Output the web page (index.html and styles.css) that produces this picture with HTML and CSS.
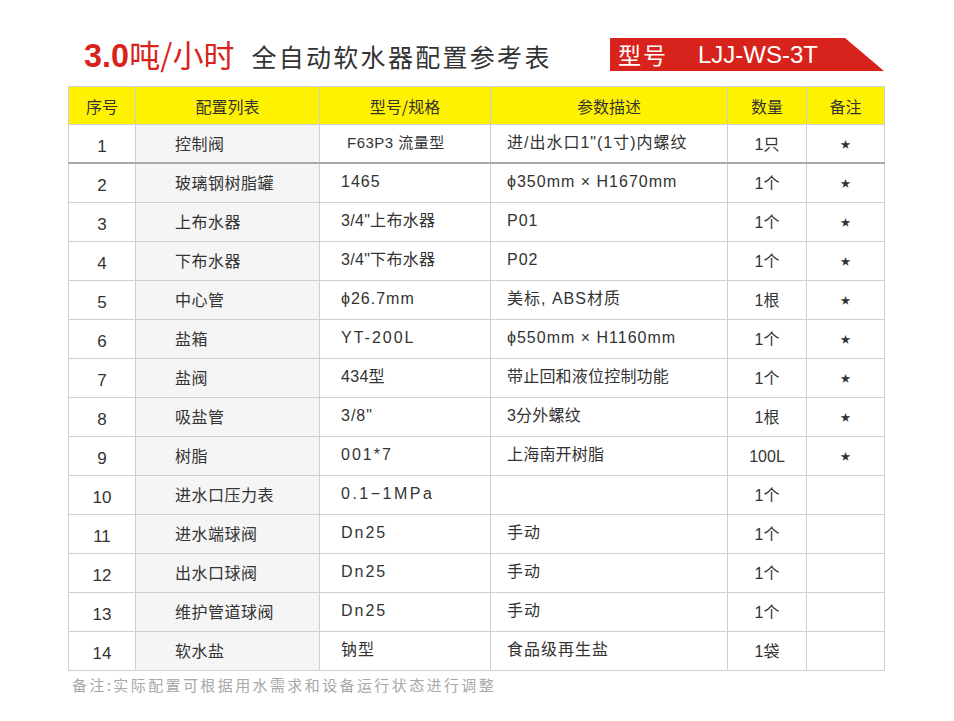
FILE: index.html
```html
<!DOCTYPE html>
<html lang="zh">
<head>
<meta charset="utf-8">
<link rel="stylesheet" href="styles.css">
</head>
<body>
<div class="page">
  <div class="titlebar">
    <h1 class="title"><span class="cap"><b class="num">3.0</b>吨/小时</span><span class="sub">全自动软水器配置参考表</span></h1>
    <div class="model">
      <svg class="model-bg" width="274" height="33" viewBox="0 0 274 33"><polygon points="0,0 235,0 274,33 0,33" fill="#d8231d"/></svg>
      <span class="model-label">型号</span><span class="model-code">LJJ-WS-3T</span>
    </div>
  </div>
  <table class="spec">
    <colgroup>
      <col class="c1"><col class="c2"><col class="c3"><col class="c4"><col class="c5"><col class="c6">
    </colgroup>
    <thead>
      <tr><th>序号</th><th>配置列表</th><th>型号/规格</th><th class="dash">参数描述</th><th>数量</th><th>备注</th></tr>
    </thead>
    <tbody>
      <tr class="first"><td class="n">1</td><td class="name">控制阀</td><td class="spec3 f63">F63P3 流量型</td><td class="desc dash">进/出水口1"(1寸)内螺纹</td><td class="q">1只</td><td class="star">★</td></tr>
      <tr><td class="n">2</td><td class="name">玻璃钢树脂罐</td><td class="spec3">1465</td><td class="desc dash">ϕ350mm × H1670mm</td><td class="q">1个</td><td class="star">★</td></tr>
      <tr><td class="n">3</td><td class="name">上布水器</td><td class="spec3 tight">3/4"上布水器</td><td class="desc dash">P01</td><td class="q">1个</td><td class="star">★</td></tr>
      <tr><td class="n">4</td><td class="name">下布水器</td><td class="spec3 tight">3/4"下布水器</td><td class="desc dash">P02</td><td class="q">1个</td><td class="star">★</td></tr>
      <tr><td class="n">5</td><td class="name">中心管</td><td class="spec3">ϕ26.7mm</td><td class="desc dash">美标, ABS材质</td><td class="q">1根</td><td class="star">★</td></tr>
      <tr><td class="n">6</td><td class="name">盐箱</td><td class="spec3 wide">YT-200L</td><td class="desc dash">ϕ550mm × H1160mm</td><td class="q">1个</td><td class="star">★</td></tr>
      <tr><td class="n">7</td><td class="name">盐阀</td><td class="spec3 tight">434型</td><td class="desc dash tight">带止回和液位控制功能</td><td class="q">1个</td><td class="star">★</td></tr>
      <tr><td class="n">8</td><td class="name">吸盐管</td><td class="spec3">3/8"</td><td class="desc dash tight">3分外螺纹</td><td class="q">1根</td><td class="star">★</td></tr>
      <tr><td class="n">9</td><td class="name">树脂</td><td class="spec3 wide">001*7</td><td class="desc dash tight">上海南开树脂</td><td class="q">100L</td><td class="star">★</td></tr>
      <tr><td class="n">10</td><td class="name">进水口压力表</td><td class="spec3 wider">0.1−1MPa</td><td class="desc dash"></td><td class="q">1个</td><td class="star"></td></tr>
      <tr><td class="n">11</td><td class="name">进水端球阀</td><td class="spec3 wide">Dn25</td><td class="desc dash">手动</td><td class="q">1个</td><td class="star"></td></tr>
      <tr><td class="n">12</td><td class="name">出水口球阀</td><td class="spec3 wide">Dn25</td><td class="desc dash">手动</td><td class="q">1个</td><td class="star"></td></tr>
      <tr><td class="n">13</td><td class="name">维护管道球阀</td><td class="spec3 wide">Dn25</td><td class="desc dash">手动</td><td class="q">1个</td><td class="star"></td></tr>
      <tr><td class="n">14</td><td class="name">软水盐</td><td class="spec3">钠型</td><td class="desc dash">食品级再生盐</td><td class="q">1袋</td><td class="star"></td></tr>
    </tbody>
  </table>
  <p class="note">备注:实际配置可根据用水需求和设备运行状态进行调整</p>
</div>
</body>
</html>
```

FILE: styles.css
```css
html, body {
  margin: 0;
  padding: 0;
  background: #ffffff;
}

body {
  font-family: "Liberation Sans", "Noto Sans CJK SC", sans-serif;
  color: #333333;
}

.page {
  width: 816px;
  margin-left: 68px;
  padding-top: 35px;
}

.titlebar {
  display: flex;
  justify-content: space-between;
  align-items: flex-end;
  height: 37px;
  margin-bottom: 14px;
}

.title {
  margin: 0 0 0 16px;
  font-weight: normal;
  display: flex;
  align-items: baseline;
  line-height: 1;
  white-space: nowrap;
}

.cap {
  color: #d8231d;
  font-family: "Noto Sans CJK SC", sans-serif;
  font-size: 31px;
}

.num {
  font-family: "Liberation Sans", sans-serif;
  font-weight: bold;
  font-size: 34px;
  display: inline-block;
  transform: scaleX(0.95);
  transform-origin: left;
  margin-right: -2px;
}

.sub {
  margin-left: 17px;
  font-family: "Noto Sans CJK SC", sans-serif;
  font-size: 25px;
  letter-spacing: 2.3px;
  color: #333333;
}

.model {
  position: relative;
  width: 274px;
  height: 33px;
  margin-bottom: 1px;
  display: flex;
  align-items: center;
  color: #ffffff;
  white-space: nowrap;
}

.model-bg {
  position: absolute;
  left: 0;
  top: 0;
  display: block;
}

.model-label {
  position: relative;
  margin-left: 8px;
  font-family: "Noto Sans CJK SC", sans-serif;
  font-size: 23px;
  letter-spacing: 2px;
  line-height: 1;
}

.model-code {
  position: relative;
  margin-left: 30px;
  font-family: "Liberation Sans", sans-serif;
  font-size: 24px;
  line-height: 1;
}

.spec {
  border-collapse: collapse;
  table-layout: fixed;
  width: 816px;
  font-size: 16px;
  color: #333333;
}

.c1 { width: 67px; }
.c2 { width: 184px; }
.c3 { width: 171px; }
.c4 { width: 237px; }
.c5 { width: 79px; }
.c6 { width: 78px; }

.spec th,
.spec td {
  border: 1px solid #cfcfcf;
  white-space: nowrap;
  overflow: hidden;
  line-height: 20px;
}

.spec th {
  background: #fff200;
  font-weight: normal;
  height: 27px;
  padding: 5px 0;
  text-align: center;
  font-family: "Noto Sans CJK SC", sans-serif;
  font-size: 16px;
  color: #333333;
}

.spec td {
  height: 28px;
  padding: 4px 0 6px;
}

.spec .dash {
  border-left: 1px dashed #bdbdbd;
}

.spec tr.first td {
  border-bottom: 2px solid #a9a9a9;
  height: 27px;
}

.spec td.n {
  text-align: center;
  padding: 8px 0 2px;
  font-size: 17px;
}

.spec td.name {
  background: #f5f5f5;
  padding-left: 39px;
  font-family: "Noto Sans CJK SC", sans-serif;
  letter-spacing: 0.5px;
}

.spec td.spec3 {
  padding-left: 21px;
  letter-spacing: 1px;
}

.spec td.spec3.f63 {
  padding-left: 27px;
  font-size: 15px;
  letter-spacing: 0.5px;
}

.spec td.spec3.tight {
  letter-spacing: 0.3px;
}

.spec td.spec3.wide {
  letter-spacing: 2px;
}

.spec td.spec3.wider {
  letter-spacing: 2.5px;
}

.spec td.desc {
  padding-left: 16px;
  letter-spacing: 1px;
}

.spec td.desc.tight {
  letter-spacing: 0.2px;
}

.spec td.q {
  text-align: center;
  padding: 6px 0 4px;
}

.spec td.star {
  text-align: center;
  font-size: 10px;
  padding: 6px 0 4px;
}

.note {
  margin: 4px 0 0 4px;
  font-family: "Noto Sans CJK SC", sans-serif;
  font-size: 15px;
  line-height: 20px;
  letter-spacing: 2.4px;
  color: #a8a8a8;
}
```
